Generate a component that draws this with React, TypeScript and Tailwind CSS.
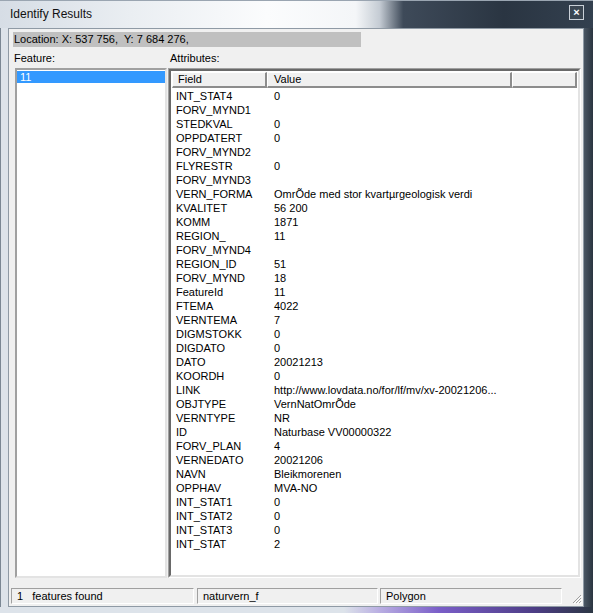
const rows: [string, string][] = [
  ['INT_STAT4', '0'],
  ['FORV_MYND1', ''],
  ['STEDKVAL', '0'],
  ['OPPDATERT', '0'],
  ['FORV_MYND2', ''],
  ['FLYRESTR', '0'],
  ['FORV_MYND3', ''],
  ['VERN_FORMA', 'OmrÕde med stor kvartµrgeologisk verdi'],
  ['KVALITET', '56 200'],
  ['KOMM', '1871'],
  ['REGION_', '11'],
  ['FORV_MYND4', ''],
  ['REGION_ID', '51'],
  ['FORV_MYND', '18'],
  ['FeatureId', '11'],
  ['FTEMA', '4022'],
  ['VERNTEMA', '7'],
  ['DIGMSTOKK', '0'],
  ['DIGDATO', '0'],
  ['DATO', '20021213'],
  ['KOORDH', '0'],
  ['LINK', 'http://www.lovdata.no/for/lf/mv/xv-20021206...'],
  ['OBJTYPE', 'VernNatOmrÕde'],
  ['VERNTYPE', 'NR'],
  ['ID', 'Naturbase VV00000322'],
  ['FORV_PLAN', '4'],
  ['VERNEDATO', '20021206'],
  ['NAVN', 'Bleikmorenen'],
  ['OPPHAV', 'MVA-NO'],
  ['INT_STAT1', '0'],
  ['INT_STAT2', '0'],
  ['INT_STAT3', '0'],
  ['INT_STAT', '2'],
]

const headCell =
  'h-full flex items-center bg-[#f0f0f0] border-t border-l border-t-white border-l-white border-r-2 border-b-2 border-r-[#8c8c8c] border-b-[#8c8c8c]'

const statusCell =
  'h-full flex items-center px-[5px] border border-t-[#a0a0a0] border-l-[#a0a0a0] border-r-white border-b-white whitespace-pre'

export default function App() {
  return (
    <div className="w-[593px] h-[613px] flex flex-col overflow-hidden bg-[#2c3744] font-['Liberation_Sans',Arial,sans-serif] text-[11px] leading-none text-black">
      {/* title bar */}
      <div className="h-[28px] shrink-0 flex items-center justify-between pl-[10px] pr-[9px] border-t border-t-[#9aa5b1] bg-[linear-gradient(90deg,#d6dde5_0%,#eaeef2_22%,#fbfcfd_45%,#f4f6f8_60%,#c5ccd4_64%,#3e4a59_68%,#2a3542_85%,#33404f_100%)]">
        <span className="text-[12px] text-[#111] -mt-[2px]">Identify Results</span>
        <div className="w-[15px] h-[15px] -mt-[4px] border border-[#c9d0d8] bg-[#3b4652] flex items-center justify-center text-white text-[11px] font-bold">
          ×
        </div>
      </div>

      <div className="flex-1 flex">
        <div className="w-[8px] border-l border-l-[#7b8794] bg-[#dde3ea]" />

        {/* client area */}
        <div className="w-[576px] border border-[#8f9aa5] bg-[#f0f0f0] flex flex-col">
          <div className="ml-[4px] mt-[3px] w-[348px] h-[15px] bg-[#c0c0c0] flex items-center pl-[1px]">
            Location: X: 537 756,&nbsp; Y: 7 684 276,
          </div>

          <div className="mt-[4px] h-[14px] flex items-center">
            <span className="pl-[5px] w-[161px]">Feature:</span>
            <span>Attributes:</span>
          </div>

          <div className="mt-[3px] h-[510px] flex">
            {/* feature list */}
            <div className="ml-[6px] w-[152px] h-full border-2 border-t-[#a0a0a0] border-l-[#a0a0a0] border-r-[#e3e3e3] border-b-[#e3e3e3] bg-white">
              <div className="mt-[1px] h-[12px] bg-[#3399ff] text-white flex items-center pl-[3px]">11</div>
            </div>

            {/* attributes */}
            <div className="ml-[1px] w-[413px] h-full border border-t-[#a0a0a0] border-l-[#a0a0a0] border-r-white border-b-white">
              <div className="h-full border-2 border-t-[#696969] border-l-[#696969] border-r-[#e3e3e3] border-b-[#e3e3e3] bg-white p-[1px] flex flex-col">
                <div className="h-[16px] shrink-0 flex">
                  <div className={`${headCell} w-[95px] pl-[5px]`}>Field</div>
                  <div className={`${headCell} w-[245px] pl-[6px]`}>Value</div>
                  <div className={`${headCell} flex-1`} />
                </div>
                <div className="pt-[1px]">
                  {rows.map(([f, v]) => (
                    <div key={f} className="h-[14px] flex items-center">
                      <span className="w-[102px] pl-[4px]">{f}</span>
                      <span className="whitespace-pre">{v}</span>
                    </div>
                  ))}
                </div>
              </div>
            </div>
          </div>

          {/* status bar */}
          <div className="mt-[10px] h-[16px] flex items-center">
            <div className={`${statusCell} ml-[2px] w-[183px]`}>1   features found</div>
            <div className={`${statusCell} ml-[3px] w-[181px]`}>naturvern_f</div>
            <div className={`${statusCell} ml-[2px] w-[182px]`}>Polygon</div>
            <div className="flex-1 h-full flex items-end justify-end pr-[1px]">
              <svg width="11" height="11" viewBox="0 0 11 11">
                <path d="M10 2 L2 10 M10 5 L5 10 M10 8 L8 10" stroke="#a0a0a0" strokeWidth="1" />
                <path d="M11 3 L3 11 M11 6 L6 11 M11 9 L9 11" stroke="#ffffff" strokeWidth="1" />
              </svg>
            </div>
          </div>
        </div>

        <div className="flex-1 bg-[linear-gradient(90deg,#4a5663,#2a3440)]" />
      </div>

      <div className="h-[6px] shrink-0 bg-[linear-gradient(90deg,#dde3ea_0%,#dde3ea_58%,#b9aee2_64%,#7a5ec8_74%,#4d3d86_90%,#2c3744_100%)]" />
    </div>
  )
}
